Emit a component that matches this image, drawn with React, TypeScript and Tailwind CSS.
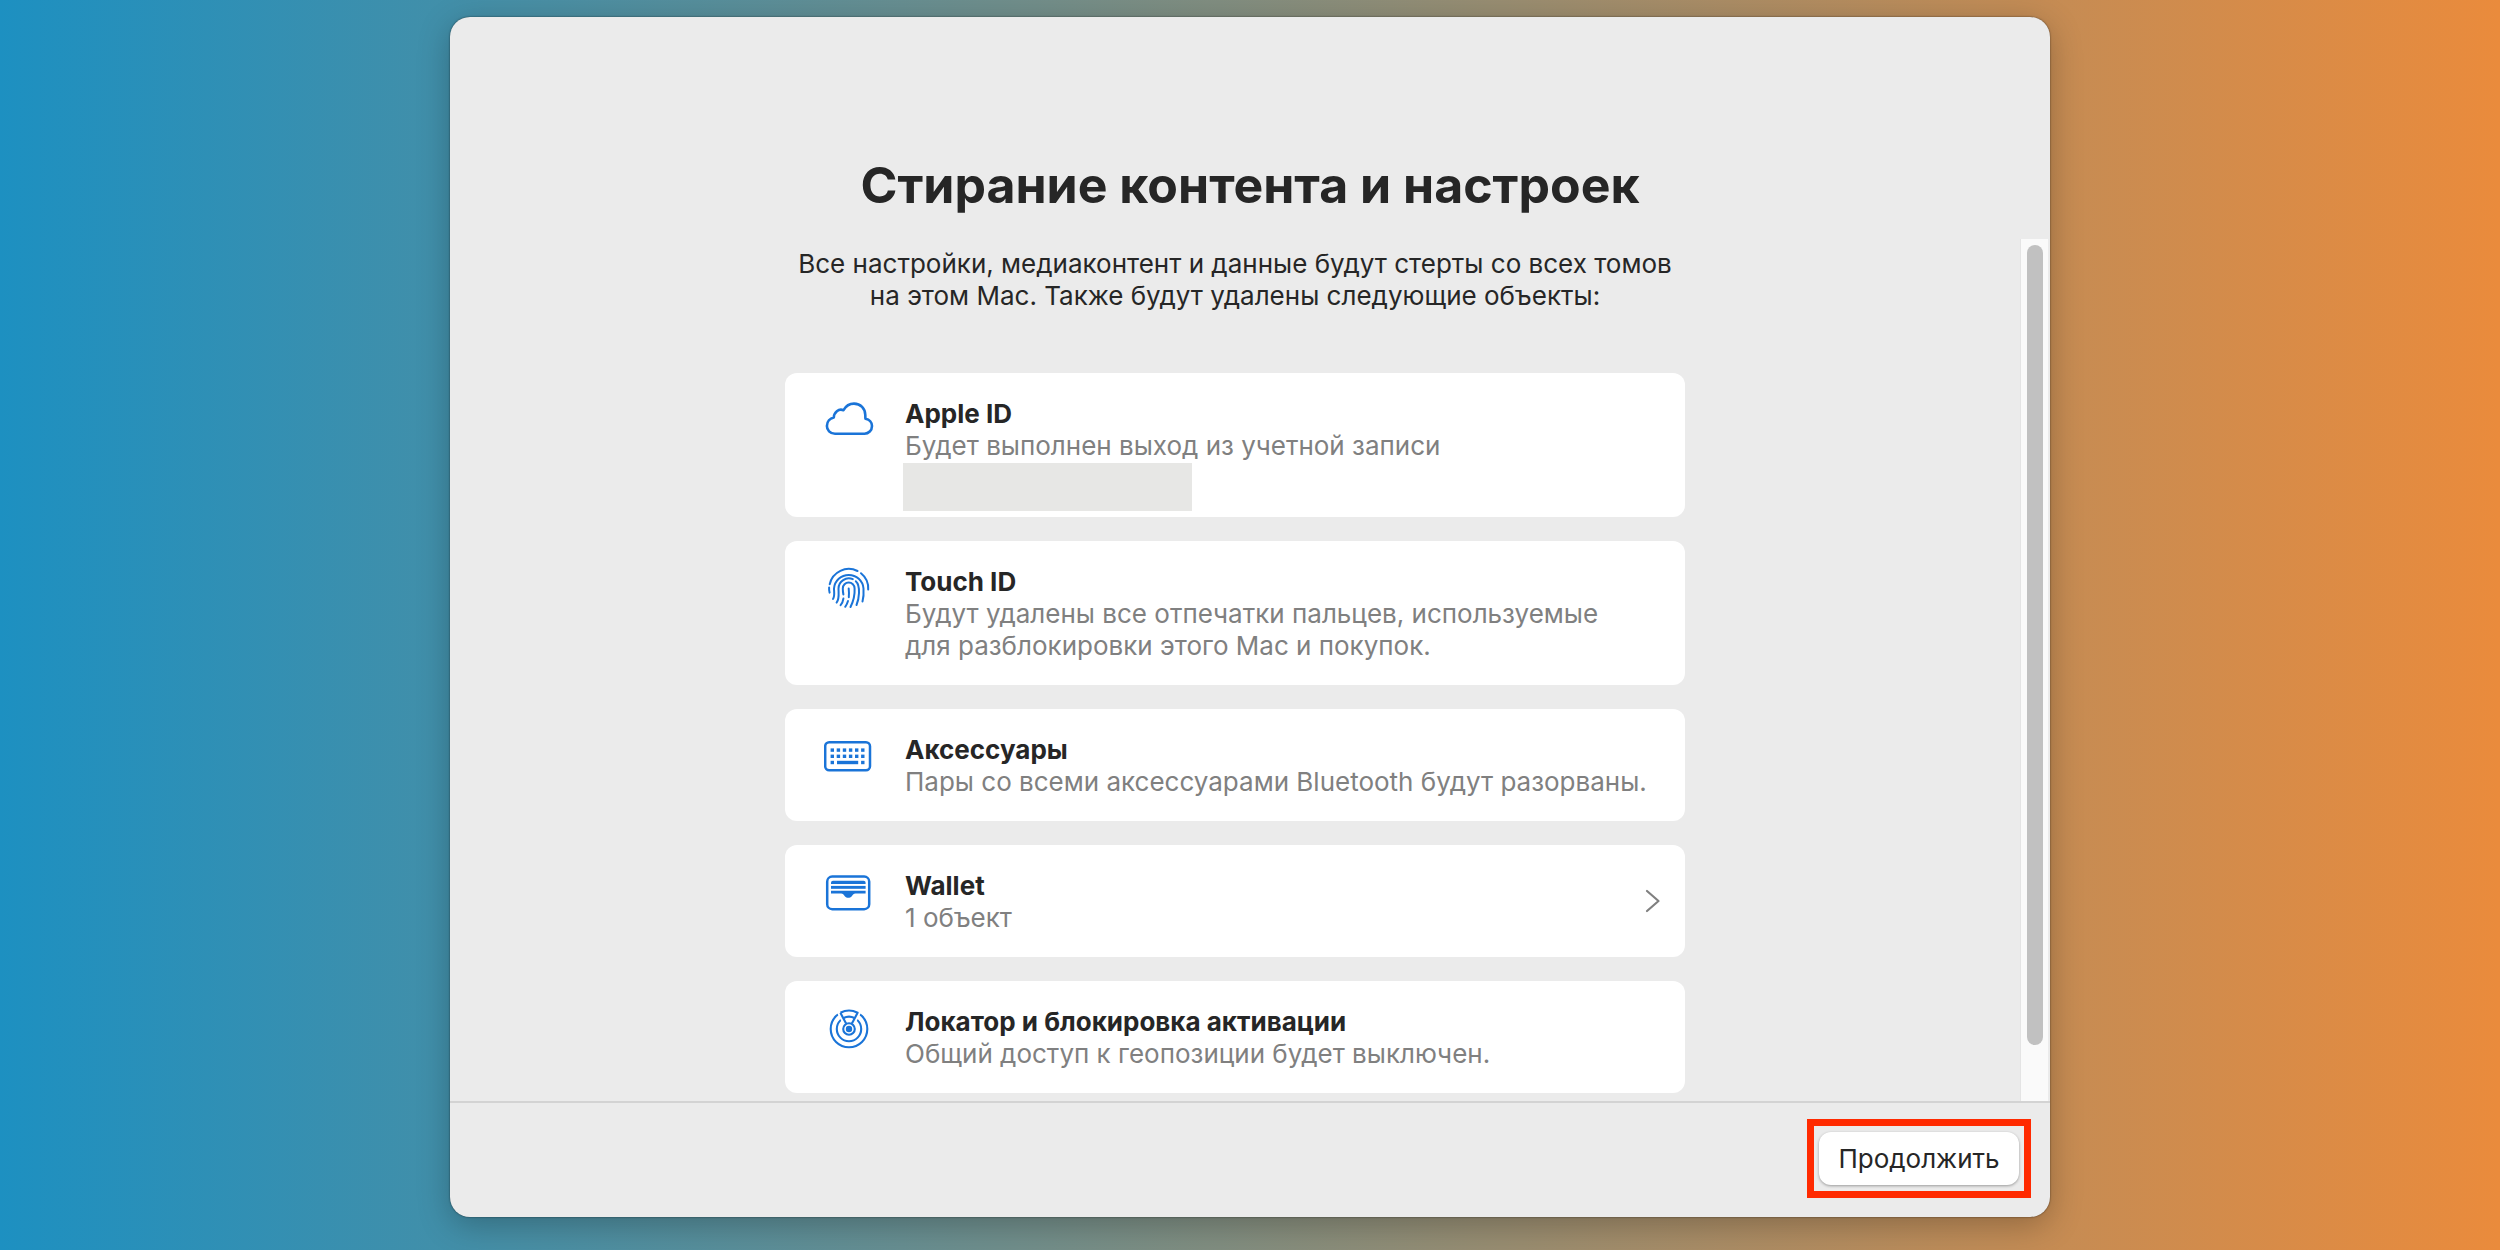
import type { ReactNode } from "react";

function CloudIcon() {
  return (
    <svg viewBox="0 0 50 50" className="size-full" fill="none" stroke="currentColor" strokeWidth="2.6" strokeLinejoin="round">
      <path d="M11 38.7C6 38.7 2.9 35 2.9 31C2.9 26.5 6 23.3 9.8 22.5C10 17.5 14.5 13.2 19.5 15.2C22 10.7 25.5 8.6 30 8.6C36.5 8.6 41.3 13.5 41.3 20C41.3 21.5 41.3 23 41.5 23.8C45.5 24.5 48 27.5 48 31C48 35.5 44.5 38.7 40.5 38.7Z" />
    </svg>
  );
}

function FingerprintIcon() {
  return (
    <svg viewBox="0 0 50 50" className="size-full" fill="none" stroke="currentColor" strokeWidth="2" strokeLinecap="round">
      <path d="M5.7 21.2A19.5 19.5 0 0 1 33.5 8" />
      <path d="M37 10.2A19.5 19.5 0 0 1 44.2 26.5" />
      <path d="M5.1 24.5C5 26.3 5.1 28 5.6 29.6" />
      <path d="M9 36C11 33 10 29 10 25.5A14.8 14.8 0 0 1 39.5 25.5C39.8 30 39.5 35 38.5 38.5" />
      <path d="M12.6 39.6C15.6 36 14.5 30 14.5 25.5A10.3 10.3 0 0 1 28.8 16.2" />
      <path d="M31.8 18.2C35 21 35.2 25 35 30C34.8 35 33.8 39 32.5 42" />
      <path d="M19.4 31.5C19 29.5 18.8 27.5 18.8 25.5A5.9 5.9 0 0 1 30.6 25.5C31 33 29 39 26.5 44" />
      <path d="M16.6 42.2C18.2 40.3 19 38.5 19.4 35.6" />
      <path d="M24.7 25.5C25 28.5 25.2 31 24.8 34.2" />
      <path d="M24 38C23.4 40.2 22.5 42 21.2 43.8" />
    </svg>
  );
}

function KeyboardIcon() {
  const columns = [8.3, 14.4, 20.5, 26.6, 32.7, 38.8];
  return (
    <svg viewBox="0 0 50 50" className="size-full" fill="currentColor">
      <rect x="1.2" y="11.2" width="44.8" height="28" rx="4" fill="none" stroke="currentColor" strokeWidth="2.5" />
      {columns.map((x) => (
        <g key={x}>
          <rect x={x - 1.7} y="17.4" width="3.4" height="3.4" />
          <rect x={x - 1.7} y="23.6" width="3.4" height="3.4" />
        </g>
      ))}
      <rect x="6.6" y="29.8" width="3.4" height="3.4" />
      <rect x="13" y="29.8" width="21.2" height="3.4" />
      <rect x="37.1" y="29.8" width="3.4" height="3.4" />
    </svg>
  );
}

function WalletIcon() {
  return (
    <svg viewBox="0 0 50 50" className="size-full" fill="currentColor">
      <rect x="3.2" y="9.6" width="42" height="32.6" rx="5" fill="none" stroke="currentColor" strokeWidth="2.5" />
      <path d="M7 17V15.8Q7 13.8 9 13.8H39.6Q41.6 13.8 41.6 15.8V17Z" />
      <rect x="7" y="18.9" width="34.6" height="2.9" />
      <path d="M7 23.7H41.6V26.6H31.5C29.5 26.6 29.2 27.8 27.8 29.2C25.7 31.4 22.9 31.4 20.8 29.2C19.4 27.8 19.1 26.6 17.1 26.6H7Z" />
    </svg>
  );
}

function LocatorIcon() {
  return (
    <svg viewBox="0 0 50 50" className="size-full" fill="none" stroke="currentColor" strokeWidth="2.1">
      <circle cx="25" cy="26" r="18.3" />
      <circle cx="25" cy="26" r="12.2" />
      <path d="M16.4 9.8A18.3 18.3 0 0 1 33.6 9.8L28 20.5H22Z" fill="#fff" stroke="#fff" strokeWidth="6" />
      <circle cx="25" cy="26" r="5.8" fill="#fff" />
      <path d="M16.4 9.8A18.3 18.3 0 0 1 33.6 9.8L27.9 20.6M16.4 9.8L22.1 20.6" strokeLinejoin="round" />
      <path d="M19.5 15A12.2 12.2 0 0 1 30.5 15" />
      <circle cx="25" cy="26" r="3.2" fill="currentColor" stroke="none" />
    </svg>
  );
}

function Item({ icon, title, children, more }: { icon: ReactNode; title: string; children: ReactNode; more?: boolean }) {
  return (
    <li className="flex rounded-xl bg-white pr-6 pl-[39px]">
      <div className="mt-[22px] size-[50px] shrink-0 text-[#1a74d8]" aria-hidden="true">
        {icon}
      </div>
      <div className="ml-[31px] min-w-0 flex-1 pt-[25px] pb-[23px]">
        <h2 className="font-bold">{title}</h2>
        <div className="text-[#808080]">{children}</div>
      </div>
      {more && (
        <button type="button" aria-label={title} className="self-center text-[#808080]">
          <svg viewBox="0 0 16 24" className="h-6 w-4" fill="none" stroke="currentColor" strokeWidth="2.2" strokeLinecap="round" strokeLinejoin="round">
            <path d="M2 2L13.5 12L2 22" />
          </svg>
        </button>
      )}
    </li>
  );
}

export default function App() {
  return (
    <div className="min-h-screen bg-linear-to-r/srgb from-[#1d90c1] to-[#ea8b3c] px-8 pt-[17px] pb-[33px] font-['Inter','Liberation_Sans',sans-serif] text-[26px] leading-8 text-[#262626]">
      <main className="mx-auto max-w-[1600px] overflow-hidden rounded-[20px] bg-[#ebebeb] shadow-[0_0_2px_rgba(0,0,0,0.6),0_8px_32px_rgba(0,0,0,0.25)]">
        <h1 className="pt-[136px] text-center text-[50px] leading-[64px] font-bold">Стирание контента и настроек</h1>

        <div className="mt-[22px] flex pr-[2px]">
          <div className="flex-1 pt-[9px] pb-2">
            <p className="text-center">
              Все настройки, медиаконтент и данные будут стерты со всех томов
              <br />
              на этом Mac. Также будут удалены следующие объекты:
            </p>

            <ul className="mx-auto mt-[61px] flex max-w-[900px] flex-col gap-6">
              <Item icon={<CloudIcon />} title="Apple ID">
                <p>Будет выполнен выход из учетной записи</p>
                <div className="h-8 pt-px">
                  <div className="-ml-[2px] h-12 w-[289px] bg-[#e7e7e5]" />
                </div>
              </Item>
              <Item icon={<FingerprintIcon />} title="Touch ID">
                Будут удалены все отпечатки пальцев, используемые
                <br />
                для разблокировки этого Mac и покупок.
              </Item>
              <Item icon={<KeyboardIcon />} title="Аксессуары">
                Пары со всеми аксессуарами Bluetooth будут разорваны.
              </Item>
              <Item icon={<WalletIcon />} title="Wallet" more>
                1 объект
              </Item>
              <Item icon={<LocatorIcon />} title="Локатор и блокировка активации">
                Общий доступ к геопозиции будет выключен.
              </Item>
            </ul>
          </div>

          <div className="w-7 border-l border-[#e4e4e4] bg-[#fafafa] pt-[6px] pl-[6px]" aria-hidden="true">
            <div className="h-[93.5%] w-4 rounded-full bg-[#c1c1c1]" />
          </div>
        </div>

        <footer className="flex justify-end border-t-2 border-[#d3d3d3] pt-4 pr-[19px] pb-[19px]">
          <div className="border-[7px] border-[#ff2a00] px-[5px] py-[6px]">
            <button type="button" className="h-[53px] w-[200px] rounded-xl bg-white shadow-[0_1px_3px_rgba(0,0,0,0.35)]">
              Продолжить
            </button>
          </div>
        </footer>
      </main>
    </div>
  );
}
